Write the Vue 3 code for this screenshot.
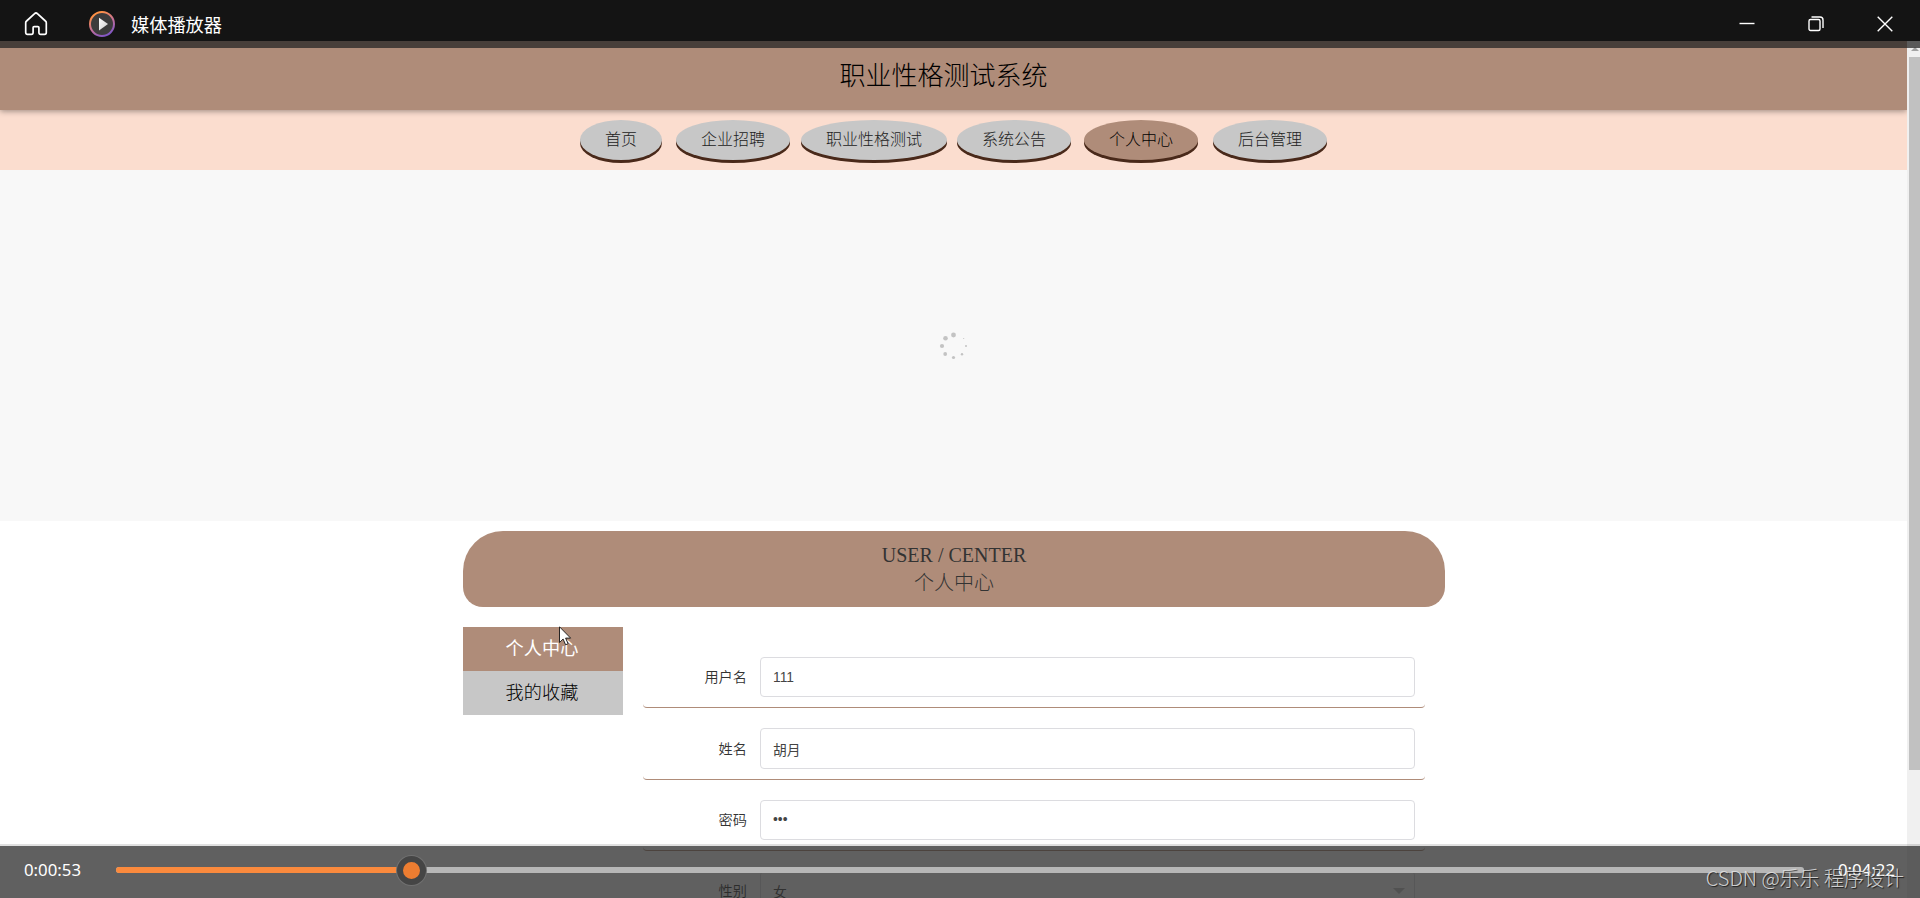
<template>
  <div class="player">
    <header class="title-bar">
      <svg class="home-icon" viewBox="0 0 24 24"><path d="M10.600 1.700a2 2 0 0 1 2.800 0l8 7.300c.6.5.9 1.100.9 1.800v9.700c0 1.100-.7 1.800-1.700 1.800h-4c-1 0-1.700-.7-1.700-1.700v-5c0-.6-.4-1-1-1h-3.800c-.6 0-1 .4-1 1v5c0 1-.7 1.700-1.700 1.700h-4c-1 0-1.700-.7-1.700-1.800v-9.700c0-.7.3-1.300.9-1.800z" /></svg>
      <svg class="app-icon" viewBox="0 0 26 26">
        <defs>
          <linearGradient id="ring" x1="0.2" y1="0" x2="0.7" y2="1">
            <stop offset="0.1" stop-color="#ff9145" />
            <stop offset="0.55" stop-color="#c4709a" />
            <stop offset="1" stop-color="#7d55c7" />
          </linearGradient>
          <linearGradient id="tri" x1="0" y1="0" x2="1" y2="1">
            <stop offset="0" stop-color="#fff" />
            <stop offset="1" stop-color="#ccc" />
          </linearGradient>
        </defs>
        <circle cx="13" cy="13" r="12" fill="#3c3c3c" stroke="url(#ring)" stroke-width="2" />
        <path d="M10 6.800l9 6.200-9 6.400z" fill="url(#tri)" />
      </svg>
      <span class="app-name">媒体播放器</span>
      <div class="window-buttons">
        <svg viewBox="0 0 16 16"><path d="M.5 7.500h15" /></svg>
        <svg viewBox="0 0 16 16"><rect x="1" y="3.500" width="11" height="11" rx="1.500" /><path d="M3.500 1h8.500a3 3 0 0 1 3 3v8" /></svg>
        <svg viewBox="0 0 16 16"><path d="M.7.7l14.600 14.600M15.300.7L.7 15.300" /></svg>
      </div>
    </header>

    <div class="viewport">
      <div class="page">
        <div class="site-title"><span>职业性格测试系统</span></div>
        <nav class="site-nav">
          <a v-for="item in navItems" :key="item" :class="{ active: item === '个人中心' }">{{ item }}</a>
        </nav>
        <div class="carousel">
          <svg class="spinner" viewBox="0 0 30 30">
            <circle v-for="(d, i) in dots" :key="i" :cx="d[0]" :cy="d[1]" :r="d[2]" />
          </svg>
        </div>
        <div class="banner">
          <div>USER / CENTER</div>
          <div class="banner-sub">个人中心</div>
        </div>
        <div class="center-body">
          <ul class="side-menu">
            <li class="active">个人中心</li>
            <li>我的收藏</li>
          </ul>
          <form class="user-form">
            <div class="form-item" v-for="field in fields" :key="field.label">
              <label>{{ field.label }}</label>
              <div class="field">
                <span>{{ field.value }}</span>
                <i v-if="field.select" class="caret"></i>
              </div>
            </div>
          </form>
        </div>
      </div>
      <div class="scrollbar">
        <i class="scroll-up"></i>
        <div class="scroll-thumb"></div>
      </div>
    </div>

    <div class="title-shade"></div>
    <svg class="cursor" viewBox="0 0 13 20"><path d="M.5.8v15.700l3.600-3.500 2.500 5.800 2.500-1.100-2.500-5.600h5z" /></svg>

    <footer class="controls">
      <span class="time">0:00:53</span>
      <div class="track">
        <div class="played" :style="{ width: progress + '%' }"></div>
        <div class="thumb" :style="{ left: progress + '%' }"></div>
      </div>
      <span class="time">0:04:22</span>
    </footer>
    <div class="watermark">CSDN @乐乐 程序设计</div>
  </div>
</template>

<script setup>
const navItems = ['首页', '企业招聘', '职业性格测试', '系统公告', '个人中心', '后台管理'];

const fields = [
  { label: '用户名', value: '111' },
  { label: '姓名', value: '胡月' },
  { label: '密码', value: '•••' },
  { label: '性别', value: '女', select: true },
];

const dots = [
  [14.5, 4, 2.4], [6.5, 7.2, 2.3], [3, 15, 2.1], [6.2, 23, 1.9],
  [14.5, 26.5, 1.6], [23, 23.3, 1.2], [27, 15, 1], [24.7, 7.5, 0.6],
];

const progress = 17.51;
</script>

<style>
body { margin: 0; overflow: hidden; }
</style>

<style scoped>
.player {
  position: relative; display: flex; flex-direction: column; width: 1920px; height: 898px; overflow: hidden; background: #fff;
  font-family: 'Noto Sans', 'Noto Sans CJK SC', sans-serif;
}
.title-bar { display: flex; align-items: center; flex: none; box-sizing: border-box; height: 41px; padding: 7px 27px 0 24px; background: #141414; color: #fff; }
.home-icon { width: 24px; height: 24px; fill: none; stroke: #fff; stroke-width: 1.7; }
.app-icon { width: 26px; height: 26px; margin-left: 41px; }
.app-name { margin-left: 16px; padding-bottom: 1px; font-family: 'Noto Sans CJK SC', sans-serif; font-size: 18.2px; line-height: 26px; }
.window-buttons { display: flex; gap: 53px; margin-left: auto; }
.window-buttons svg { width: 16px; height: 16px; fill: none; stroke: #fff; stroke-width: 1.4; }

.viewport { display: flex; flex: 1; min-height: 0; }
.page { width: 1907px; overflow: hidden; font-family: 'Noto Sans CJK SC', sans-serif; }
.site-title {
  position: relative; box-sizing: border-box; height: 69px; padding: 14px 20px 0 0; background: #af8c79; box-shadow: 0 1px 6px rgba(0, 0, 0, 0.4);
  text-align: center; font-size: 26px; font-weight: 300; line-height: 38px; color: #000;
}
.site-nav { display: flex; box-sizing: border-box; height: 60px; padding: 10px 0 0 580px; background: #fbddcf; }
.site-nav a {
  height: 40px; margin-right: 10px; padding: 0 25px; border-radius: 50%; background: #c7c7c7; box-shadow: 0 3px 0 #49291a;
  font-size: 16px; font-weight: 300; line-height: 37px; color: #222;
}
.site-nav a:first-child { margin-right: 14px; }
.site-nav a:nth-child(2) { margin-right: 11px; }
.site-nav a:nth-child(4) { margin-right: 13px; }
.site-nav a:nth-child(5) { margin-right: 15px; }
.site-nav a.active { background: #af8c79; color: #000; }
.carousel { display: flex; align-items: center; justify-content: center; height: 351px; background: #f8f8f8; }
.spinner { width: 30px; height: 30px; fill: #c3c3c3; }

.banner {
  box-sizing: border-box; width: 982px; height: 76px; margin: 10px 0 0 463px; padding-top: 10px; border-radius: 40px 40px 20px 20px; background: #af8c79;
  text-align: center; font-family: 'Liberation Serif', 'Noto Sans CJK SC', serif; font-size: 20px; line-height: 28px; color: #333;
}
.banner-sub { font-weight: 300; line-height: 29px; }
.center-body { display: flex; align-items: flex-start; gap: 20px; margin: 20px 0 0 463px; }
.side-menu { width: 160px; margin: 0; padding: 0; list-style: none; }
.side-menu li { box-sizing: border-box; height: 44px; padding-right: 2px; background: #c7c7c7; text-align: center; font-size: 18.2px; font-weight: 300; line-height: 41px; color: #000; }
.side-menu .active { background: #af8c79; font-weight: 400; color: #fff; }
.user-form { width: 782px; padding-top: 20px; }
.form-item {
  display: flex; align-items: center; box-sizing: border-box; height: 61.4px; margin-bottom: 10px; padding: 10px 10px 10px 0;
  border-bottom: 1px solid #af8c79; border-radius: 4px;
}
.form-item label { width: 104px; margin-right: 13px; padding-bottom: 2px; text-align: right; font-size: 14.2px; font-weight: 350; line-height: 38px; color: #333; }
.field {
  display: flex; align-items: center; justify-content: space-between; box-sizing: border-box; width: 655px; height: 40.4px; padding: 0 9px 0 12px;
  border: 1px solid #dcdce0; border-radius: 4px; background: #fff; font-family: 'Liberation Sans', 'Noto Sans CJK SC', sans-serif; font-size: 13.8px; color: #444;
}
.caret { border: 6px solid transparent; border-top-color: #c2c2c2; border-bottom: 0; }

.scrollbar { display: flex; flex-direction: column; align-items: flex-end; width: 13px; background: #f0f0f0; }
.scroll-up { margin: 6px 1px 6px 0; border: 4px solid transparent; border-top: 0; border-bottom-color: #a3a3a3; }
.scroll-thumb { width: 11px; height: 713px; background: #c1c1c1; }

.title-shade { position: absolute; top: 41px; left: 0; width: 100%; height: 7px; background: rgba(34, 34, 34, 0.73); }
.cursor { position: absolute; top: 626px; left: 559px; width: 13px; height: 20px; fill: #fff; stroke: #111; stroke-width: 0.9; }

.controls {
  position: absolute; left: 0; right: 0; bottom: 0; display: flex; align-items: center; box-sizing: border-box; height: 54px; padding: 0 24px 4px;
  border-top: 2px solid rgba(0, 0, 0, 0.12); background: rgba(43, 43, 43, 0.75); background-clip: padding-box; color: #fff;
}
.time { flex: none; width: 58px; font-size: 16.8px; line-height: 24px; white-space: nowrap; }
.track { position: relative; flex: none; width: 1688px; height: 6px; margin: 0 34px; border-radius: 3px; background: #b7b7b7; }
.played { height: 6px; border-radius: 3px; background: #fb8a3d; }
.thumb {
  position: absolute; top: -11px; box-sizing: border-box; width: 29px; height: 29px; margin-left: -14.5px; border: 6.5px solid #454545;
  border-radius: 50%; background: #ed7d31; box-shadow: 0 0 0 1px #707070;
}
.watermark {
  position: absolute; right: 16px; bottom: 5px; font-family: 'Noto Sans CJK SC', sans-serif; font-size: 20px; font-weight: 300;
  line-height: 30px; white-space: nowrap; color: rgba(225, 225, 225, 0.9); text-shadow: 1px 1px 1px rgba(0, 0, 0, 0.7);
}
</style>
